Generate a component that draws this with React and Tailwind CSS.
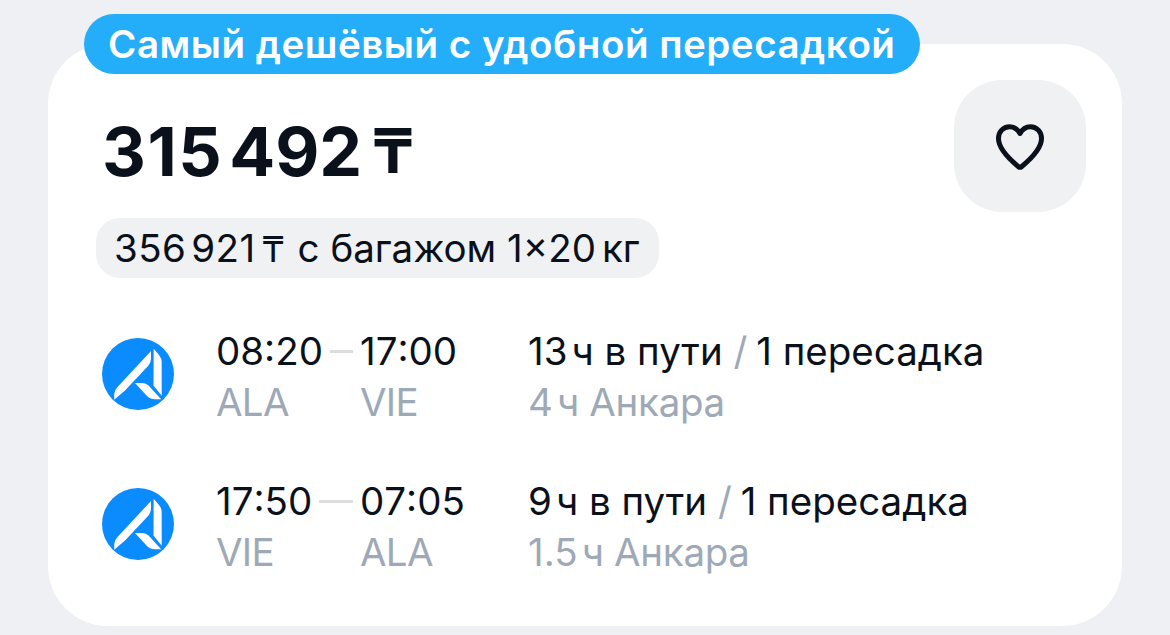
const flights = [
  {
    id: "out",
    depart: "08:20",
    arrive: "17:00",
    from: "ALA",
    to: "VIE",
    hours: "13",
    stopHours: "4",
    stopCity: "Анкара",
  },
  {
    id: "back",
    depart: "17:50",
    arrive: "07:05",
    from: "VIE",
    to: "ALA",
    hours: "9",
    stopHours: "1.5",
    stopCity: "Анкара",
  },
];

function AirlineLogo() {
  return (
    <svg viewBox="0 0 72 72" className="w-[72px] h-[72px] shrink-0 mt-[12px]">
      <circle cx="36" cy="36" r="36" fill="#0a8cff" />
      <path
        d="M12.200 61.800V56Q12.500 52 15.500 49L49 13V20.500Q49 24.500 46.500 27.500L23 52.500Z"
        fill="#fff"
      />
      <path d="M51.700 10.700L57 17Q59.700 20.500 59.700 24V57.800L51.500 47.500Z" fill="#fff" />
      <path
        d="M33 45H40.500Q44 45 46.500 47.500L59.200 61.300H53Q48.500 61.300 45 58Z"
        fill="#fff"
      />
    </svg>
  );
}

function FlightRow({ flight }) {
  return (
    <div className="flex h-[102px] text-[38.5px] leading-[51px] whitespace-nowrap">
      <AirlineLogo />
      <div className="ml-[42px] w-[312px]">
        <div className="flex items-center [font-kerning:none]">
          <div className="flex items-center w-[144px] pr-[7px]">
            <span>{flight.depart}</span>
            <span className="ml-[7px] flex-1 h-[3px] bg-[#dcdddf]" />
          </div>
          <span>{flight.arrive}</span>
        </div>
        <div className="flex text-[#9ea9b7] tracking-[-0.7px]">
          <span className="w-[144px]">{flight.from}</span>
          <span>{flight.to}</span>
        </div>
      </div>
      <div>
        <div>
          {flight.hours}
          <span className="ml-[4px]">ч в пути</span>
          <span className="text-[#9ea9b7]"> / </span>
          <span className="-ml-[2px]">1 пересадка</span>
        </div>
        <div className="text-[#9ea9b7]">
          {flight.stopHours}
          <span className="ml-[4px] tracking-[-0.3px]">ч {flight.stopCity}</span>
        </div>
      </div>
    </div>
  );
}

export default function App() {
  return (
    <div className="w-[1170px] h-[635px] overflow-hidden bg-[#eff0f4] pt-[44px] px-[48px] font-['Inter','Liberation_Sans',sans-serif] text-[#0b111b]">
      <div className="relative h-[582px] rounded-[60px] bg-white pt-[36px] pl-[48px] pr-[36px]">
        <div className="absolute -top-[30px] left-[36px] w-[836px] h-[60px] rounded-full bg-[#24aef9] pl-[24px] text-white text-[38.5px] leading-[60px] font-semibold tracking-[0.52px] whitespace-nowrap">
          Самый дешёвый с удобной пересадкой
        </div>

        <div className="flex justify-between h-[138px]">
          <div className="flex pl-[6px] pt-[31px] text-[68px] leading-[80px] font-bold whitespace-nowrap">
            <span className="tracking-[1.5px]">315</span>
            <span className="ml-[6px]">492</span>
            <span className="ml-[10px] text-[62px]">₸</span>
          </div>
          <button className="flex items-center justify-center w-[132px] h-[132px] rounded-[48px] bg-[#eff1f3]">
            <svg
              viewBox="0 0 48 46"
              fill="none"
              stroke="#0b111b"
              strokeWidth="5"
              strokeLinecap="round"
              strokeLinejoin="round"
              className="w-[48px] h-[46px] mt-[2px]"
            >
              <path d="M24 9.500C21.500 5 18 2.700 13.700 2.700C7 2.700 2.500 8 2.500 14.500C2.500 25.500 15 36.500 22.500 42.700Q24 43.900 25.500 42.700C33 36.500 45.500 25.500 45.500 14.500C45.500 8 41 2.700 34.300 2.700C30 2.700 26.500 5 24 9.500Z" />
            </svg>
          </button>
        </div>

        <div className="w-[563px] h-[60px] rounded-[24px] bg-[#eff1f3] pl-[18px] text-[38.5px] leading-[60px] whitespace-nowrap">
          <span className="tracking-[0.4px]">356</span>
          <span className="ml-[5px] tracking-[0.4px]">921</span>
          <span className="ml-[6px] text-[36px]">₸</span>
          <span className="ml-[2px]"> с багажом 1×20</span>
          <span className="ml-[6px]">кг</span>
        </div>

        <div className="flex flex-col gap-[48px] mt-[48px] pl-[6px]">
          {flights.map((flight) => (
            <FlightRow key={flight.id} flight={flight} />
          ))}
        </div>
      </div>
    </div>
  );
}
